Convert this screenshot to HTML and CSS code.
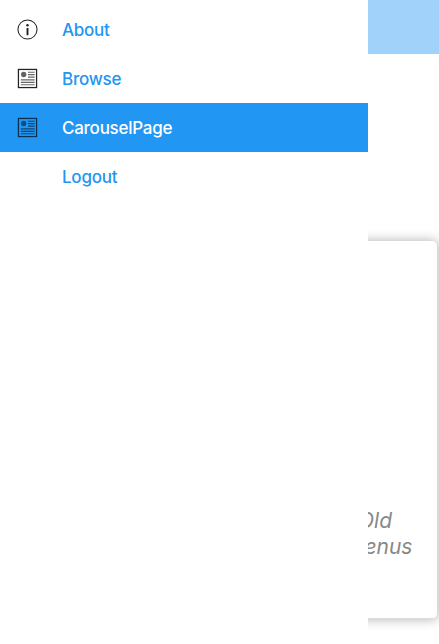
FILE: index.html
```html
<!DOCTYPE html>
<html lang="en">
<head>
    <meta charset="UTF-8">
    <meta name="viewport" content="width=device-width, initial-scale=1.0">
    <title>CarouselPage</title>
    <link rel="stylesheet" href="styles.css">
</head>
<body>
    <div class="app">
        <!-- page behind the menu -->
        <main class="page">
            <div class="page-header"></div>
            <div class="card">
                <p class="card-text">Old<br>Venus</p>
            </div>
        </main>

        <!-- flyout menu -->
        <nav class="drawer">
            <a class="menu-item">
                <svg class="menu-icon" viewBox="0 0 22 22" xmlns="http://www.w3.org/2000/svg">
                    <circle cx="11" cy="11" r="10" fill="none" stroke="currentColor" stroke-width="1.1"/>
                    <circle cx="11" cy="6.6" r="1.3" fill="currentColor"/>
                    <rect x="10" y="9.4" width="2" height="7.6" fill="currentColor"/>
                </svg>
                <span>About</span>
            </a>
            <a class="menu-item">
                <svg class="menu-icon" viewBox="0 0 22 22" xmlns="http://www.w3.org/2000/svg">
                    <rect x="1.5" y="1.5" width="19" height="19" fill="none" stroke="currentColor" stroke-width="1.3"/>
                    <circle cx="7" cy="6.8" r="2.8" fill="currentColor" opacity="0.7"/>
                    <path d="M11.5 4.5h7M11.5 7h7M11.5 9.5h7M4 12.4h14.5M4 15h14.5M4 17.6h14.5" fill="none" stroke="currentColor" stroke-width="1.2" opacity="0.7"/>
                </svg>
                <span>Browse</span>
            </a>
            <a class="menu-item menu-item-active">
                <svg class="menu-icon" viewBox="0 0 22 22" xmlns="http://www.w3.org/2000/svg">
                    <rect x="1.5" y="1.5" width="19" height="19" fill="none" stroke="currentColor" stroke-width="1.3"/>
                    <circle cx="7" cy="6.8" r="2.8" fill="currentColor" opacity="0.7"/>
                    <path d="M11.5 4.5h7M11.5 7h7M11.5 9.5h7M4 12.4h14.5M4 15h14.5M4 17.6h14.5" fill="none" stroke="currentColor" stroke-width="1.2" opacity="0.8"/>
                </svg>
                <span>CarouselPage</span>
            </a>
            <a class="menu-item">
                <span class="menu-icon"></span>
                <span>Logout</span>
            </a>
        </nav>
    </div>
</body>
</html>
```

FILE: styles.css
```css
* {
    margin: 0;
    padding: 0;
    box-sizing: border-box;
}

body {
    font-family: Inter, "Liberation Sans", sans-serif;
    background: #fff;
}

.app {
    position: relative;
    width: 439px;
    height: 644px;
    overflow: hidden;
}

/* page behind the menu */
.page {
    display: flex;
    flex-direction: column;
    height: 100%;
}

.page-header {
    height: 54px;
    background: #a0d2fa;
}

.card {
    display: flex;
    align-items: flex-end;
    height: 378px;
    margin: 187px 1px 0 0;
    padding: 0 0 58px 351px;
    background: #fff;
    border-radius: 5px;
    border-right: 1px solid #d8d8d8;
    border-bottom: 1px solid #dcdcdc;
    box-shadow: 0 0 12px rgba(0, 0, 0, 0.32);
}

.card-text {
    font-size: 21px;
    font-style: italic;
    line-height: 26px;
    color: #888;
    text-indent: 7px;
}

/* flyout menu */
.drawer {
    position: absolute;
    top: 0;
    left: 0;
    bottom: 0;
    width: 368px;
    padding-top: 5px;
    background: #fff;
}

.menu-item {
    display: flex;
    align-items: center;
    gap: 24px;
    height: 49px;
    padding-left: 17px;
    font-size: 17px;
    font-weight: 500;
    letter-spacing: -0.25px;
    color: #2196f3;
}

.menu-item-active {
    background: #2196f3;
    color: #fff;
}

.menu-icon {
    display: block;
    flex: none;
    width: 21px;
    height: 21px;
    color: #222;
}

.menu-item-active .menu-icon {
    color: #0b2f52;
}
```
